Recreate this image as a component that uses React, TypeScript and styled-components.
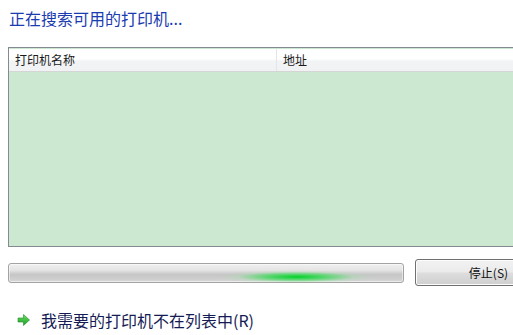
import React from "react";
import styled, { createGlobalStyle } from "styled-components";

const Global = createGlobalStyle`
  html, body { margin: 0; padding: 0; background: #fff; }
  body { font-family: "Noto Sans CJK SC", "Noto Sans", sans-serif; overflow: hidden; }
`;

const Page = styled.div`
  width: 513px;
  height: 335px;
  overflow: hidden;
  display: flex;
  flex-direction: column;
  padding-left: 8px;
  box-sizing: border-box;
`;

const Title = styled.div`
  margin-top: 7px;
  padding-left: 1px;
  height: 22px;
  line-height: 22px;
  font-size: 16px;
  color: #1a3cb0;
  white-space: nowrap;
`;

const ListBox = styled.div`
  margin-top: 18px;
  width: 520px;
  height: 200px;
  flex: none;
  border: 1px solid #848a92;
  border-right: none;
  box-sizing: border-box;
  display: flex;
  flex-direction: column;
  background: #cde8d0;
`;

const Header = styled.div`
  height: 24px;
  display: flex;
  background: linear-gradient(#ffffff 0%, #ffffff 45%, #f2f3f5 55%, #f1f2f4 100%);
  border-bottom: 1px solid #d5d5d5;
  border-top: 1px solid #cde8d0;
  box-sizing: border-box;
`;

const HeaderCell = styled.div<{ $w?: number }>`
  ${(p) => (p.$w ? `width: ${p.$w}px;` : "flex: 1;")}
  padding-left: 6px;
  font-size: 12px;
  line-height: 22px;
  color: #1a1a1a;
  border-right: 1px solid #e3e5e8;
  box-sizing: border-box;
  white-space: nowrap;
`;

const Bottom = styled.div`
  margin-top: 12px;
  display: flex;
  align-items: center;
  gap: 11px;
  height: 27px;
  width: 600px;
  flex: none;
`;

const Progress = styled.div`
  position: relative;
  flex: none;
  width: 396px;
  height: 20px;
  border: 1px solid #a3a3a3;
  border-radius: 3px;
  box-sizing: border-box;
  overflow: hidden;
  background: linear-gradient(#f0f0f0 0%, #e4e4e4 35%, #d0d0d0 50%, #c6c6c6 60%, #cfcfcf 85%, #d8d8d8 100%);
  box-shadow: inset 0 0 0 1px rgba(255,255,255,0.5);
`;

const Glow = styled.div`
  position: absolute;
  left: 210px;
  top: 1px;
  width: 155px;
  height: 17px;
  background: radial-gradient(ellipse 50% 40% at 50% 70%, rgba(0, 210, 40, 1) 0%, rgba(50, 220, 80, 0.7) 40%, rgba(150, 230, 160, 0.25) 75%, rgba(200, 230, 200, 0) 100%);
`;

const Button = styled.button`
  flex: none;
  width: 146px;
  height: 27px;
  border: 1px solid #707070;
  border-radius: 3px;
  background: linear-gradient(#f2f2f2 0%, #ebebeb 48%, #dddddd 52%, #cfcfcf 100%);
  box-shadow: inset 0 0 0 1px #fcfcfc;
  font-family: "Noto Sans CJK SC", "Noto Sans", sans-serif;
  font-size: 12px;
  color: #111;
  padding: 0;
  padding-left: 1px;
`;

const Link = styled.div`
  margin-top: 22px;
  padding-left: 9px;
  display: flex;
  align-items: center;
  gap: 10px;
  font-size: 16px;
  color: #151c55;
  white-space: nowrap;
`;

const Arrow = () => (
  <svg width="14" height="14" viewBox="0 0 14 14">
    <defs>
      <linearGradient id="ag" x1="0" y1="0" x2="0" y2="1">
        <stop offset="0" stopColor="#6fdc5e" />
        <stop offset="1" stopColor="#17a02a" />
      </linearGradient>
    </defs>
    <path d="M1 5 H6.5 V1.5 L12.5 7 L6.5 12.5 V9 H1 Z" fill="url(#ag)" stroke="#1f8a2a" strokeWidth="0.6" />
  </svg>
);

export default function App() {
  return (
    <Page>
      <Global />
      <Title>正在搜索可用的打印机...</Title>
      <ListBox>
        <Header>
          <HeaderCell $w={268}>打印机名称</HeaderCell>
          <HeaderCell>地址</HeaderCell>
        </Header>
      </ListBox>
      <Bottom>
        <Progress>
          <Glow />
        </Progress>
        <Button>停止(S)</Button>
      </Bottom>
      <Link>
        <Arrow />
        <span>我需要的打印机不在列表中(R)</span>
      </Link>
    </Page>
  );
}
